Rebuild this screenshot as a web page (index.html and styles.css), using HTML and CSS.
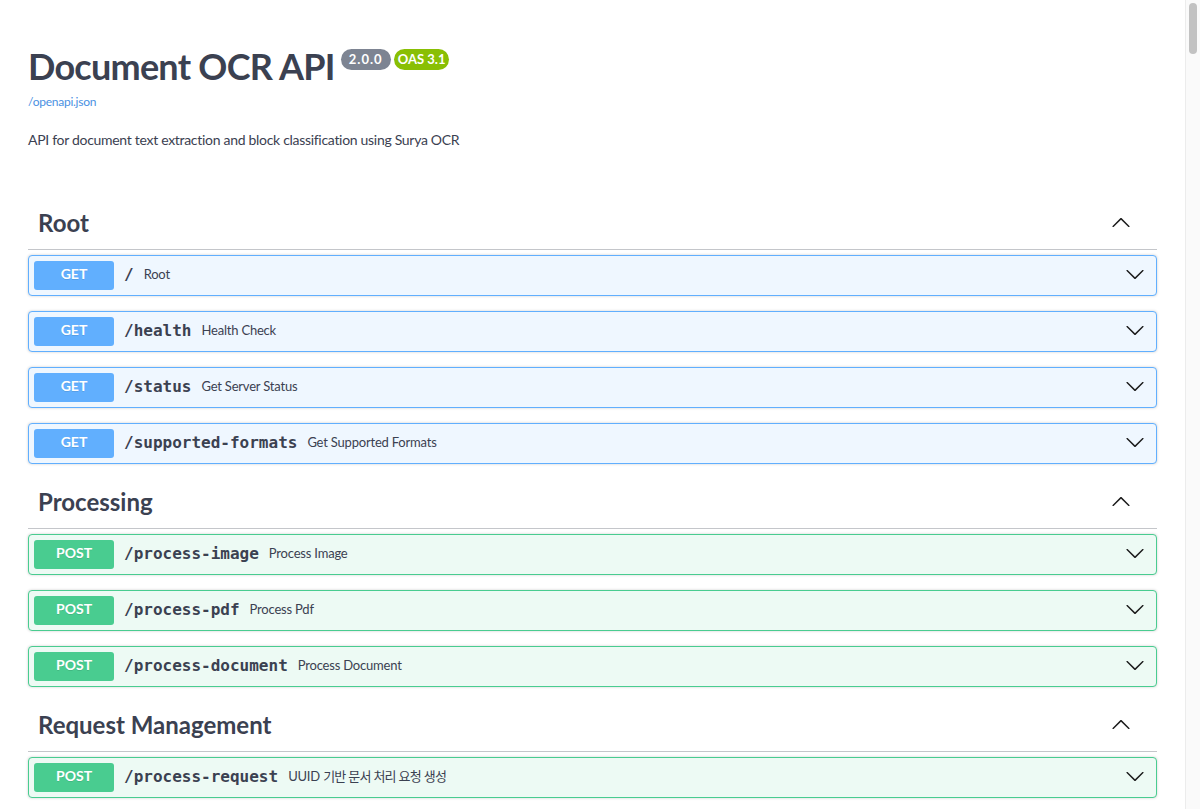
FILE: index.html
```html
<!DOCTYPE html>
<html lang="ko">
<head>
<meta charset="utf-8">
<title>Document OCR API - Swagger UI</title>
<link rel="stylesheet" href="styles.css">
</head>
<body>
<svg class="sprites" xmlns="http://www.w3.org/2000/svg">
  <defs>
    <symbol id="arrow-up" viewBox="0 0 20 20"><path d="M17.418 14.908c.272.268.709.268.979 0s.271-.701 0-.969l-7.908-7.830c-.27-.268-.707-.268-.979 0l-7.908 7.830c-.27.268-.27.701 0 .969.271.268.709.268.979 0L10 7.664l7.418 7.244z"/></symbol>
    <symbol id="arrow-down" viewBox="0 0 20 20"><path d="M17.418 6.109c.272-.268.709-.268.979 0s.271.701 0 .969l-7.908 7.830c-.27.268-.707.268-.979 0l-7.908-7.830c-.27-.268-.27-.701 0-.969.271-.268.709-.268.979 0L10 13.250l7.418-7.141z"/></symbol>
  </defs>
</svg>
<div class="swagger-ui">
  <div class="wrapper">
    <section class="info">
      <div class="title-row">
        <h2 class="title">Document OCR API</h2>
        <span class="badge version"> 2.0.0 </span>
        <span class="badge oas">OAS 3.1</span>
      </div>
      <a class="spec-url" href="#">/openapi.json</a>
      <p class="description">API for document text extraction and block classification using Surya OCR</p>
    </section>

    <section class="tag-section">
      <h3 class="tag"><span class="tag-name">Root</span><svg class="arrow-tag"><use href="#arrow-up"/></svg></h3>
      <div class="opblock get"><span class="method">GET</span><span class="path">/</span><span class="summary">Root</span><svg class="arrow-op"><use href="#arrow-down"/></svg></div>
      <div class="opblock get"><span class="method">GET</span><span class="path">/health</span><span class="summary">Health Check</span><svg class="arrow-op"><use href="#arrow-down"/></svg></div>
      <div class="opblock get"><span class="method">GET</span><span class="path">/status</span><span class="summary">Get Server Status</span><svg class="arrow-op"><use href="#arrow-down"/></svg></div>
      <div class="opblock get"><span class="method">GET</span><span class="path">/supported-formats</span><span class="summary">Get Supported Formats</span><svg class="arrow-op"><use href="#arrow-down"/></svg></div>
    </section>

    <section class="tag-section">
      <h3 class="tag"><span class="tag-name">Processing</span><svg class="arrow-tag"><use href="#arrow-up"/></svg></h3>
      <div class="opblock post"><span class="method">POST</span><span class="path">/process-image</span><span class="summary">Process Image</span><svg class="arrow-op"><use href="#arrow-down"/></svg></div>
      <div class="opblock post"><span class="method">POST</span><span class="path">/process-pdf</span><span class="summary">Process Pdf</span><svg class="arrow-op"><use href="#arrow-down"/></svg></div>
      <div class="opblock post"><span class="method">POST</span><span class="path">/process-document</span><span class="summary">Process Document</span><svg class="arrow-op"><use href="#arrow-down"/></svg></div>
    </section>

    <section class="tag-section">
      <h3 class="tag"><span class="tag-name">Request Management</span><svg class="arrow-tag"><use href="#arrow-up"/></svg></h3>
      <div class="opblock post"><span class="method">POST</span><span class="path">/process-request</span><span class="summary"><span class="latin">UUID</span> <span class="ko">기반 문서 처리 요청 생성</span></span><svg class="arrow-op"><use href="#arrow-down"/></svg></div>
    </section>
  </div>
</div>
<div class="scrollbar" aria-hidden="true"><div class="scrollbar-thumb"></div></div>
</body>
</html>
```
FILE: styles.css
```css
html, body {
  margin: 0;
  padding: 0;
  background: #fff;
}

body {
  color: #3b4151;
  font-family: Lato, "Noto Sans CJK KR", sans-serif;
  padding-right: 15px;
}

.sprites {
  position: absolute;
  width: 0;
  height: 0;
  overflow: hidden;
}

/* fake browser scrollbar (overlay, page continues below) */
.scrollbar {
  position: fixed;
  top: 0;
  right: 0;
  bottom: 0;
  width: 14px;
  background: #fafafa;
  border-left: 1px solid #ececec;
}

.scrollbar-thumb {
  margin: 3px 0 0 3px;
  width: 8px;
  height: 51px;
  border-radius: 4px;
  background: #c2c2c2;
}

.wrapper {
  padding: 0 28px;
}

/* ---------- info ---------- */
.info {
  padding-top: 44px;
  margin-bottom: 50px;
}

.title-row {
  display: flex;
  align-items: flex-start;
}

.title {
  margin: 0;
  font-size: 36px;
  line-height: 44px;
  font-weight: 700;
  letter-spacing: -0.75px;
  color: #3b4151;
}

.badge {
  margin-top: 5px;
  padding: 2px 4px;
  border-radius: 57px;
  font-size: 13px;
  line-height: 17px;
  font-weight: 700;
  color: #fff;
  white-space: pre;
}

.badge.version {
  margin-left: 6px;
  background: #7d8492;
  letter-spacing: 1px;
}

.badge.oas {
  margin-left: 3px;
  background: #89bf04;
}

.spec-url {
  display: block;
  margin-top: 6px;
  font-size: 12px;
  line-height: 16px;
  color: #4990e2;
  text-decoration: none;
  letter-spacing: -0.25px;
}

.description {
  margin: 20px 0 0;
  font-size: 14px;
  line-height: 20px;
  letter-spacing: -0.3px;
}

/* ---------- tags ---------- */
.tag {
  display: flex;
  align-items: center;
  justify-content: space-between;
  margin: 0 0 5px;
  padding: 8px 26px 12px 10px;
  border-bottom: 1px solid rgba(59, 65, 81, 0.3);
  font-size: 24px;
  line-height: 29px;
  font-weight: 700;
  color: #3b4151;
}

.arrow-tag {
  width: 20px;
  height: 20px;
  margin-top: -2px;
  fill: #1b1b1b;
  flex: none;
}

/* ---------- operations ---------- */
.opblock {
  display: flex;
  align-items: center;
  margin: 0 0 15px;
  padding: 5px;
  border: 1px solid #000;
  border-radius: 4px;
  box-shadow: 0 0 3px rgba(0, 0, 0, 0.19);
}

.opblock.get {
  background: #eff7ff;
  border-color: #61affe;
}

.opblock.post {
  background: #edfaf4;
  border-color: #49cc90;
}

.method {
  flex: none;
  min-width: 80px;
  padding: 4px 0 8px;
  border-radius: 3px;
  font-size: 14px;
  line-height: 17px;
  font-weight: 700;
  text-align: center;
  color: #fff;
  text-shadow: 0 1px 0 rgba(0, 0, 0, 0.1);
}

.get .method { background: #61affe; }
.post .method { background: #49cc90; }

.path {
  padding: 0 10px 2px;
  font-family: "DejaVu Sans Mono", monospace;
  font-size: 16px;
  font-weight: 700;
  color: #3b4151;
}

.summary {
  flex: 1;
  padding-bottom: 4px;
  font-size: 13px;
  letter-spacing: -0.2px;
  color: #3b4151;
}

.ko {
  font-family: "Noto Sans CJK KR", sans-serif;
  letter-spacing: -0.8px;
}

.arrow-op {
  flex: none;
  width: 20px;
  height: 20px;
  margin: -4px 6px 0 10px;
  fill: #1b1b1b;
}
```
